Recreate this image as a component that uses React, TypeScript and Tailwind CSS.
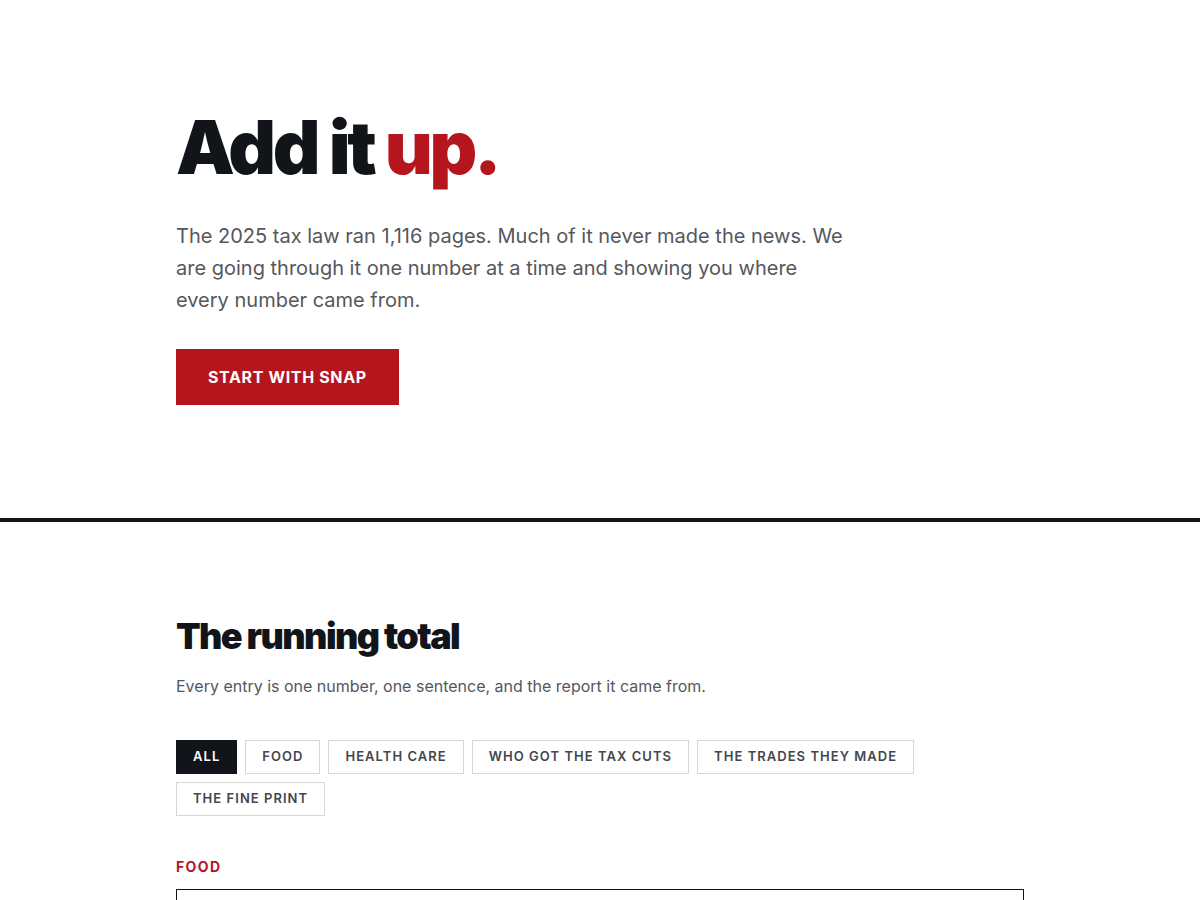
import React, { useState } from 'react';

const filters = [
    { key: 'all', label: 'All' },
    { key: 'food', label: 'Food' },
    { key: 'health', label: 'Health care' },
    { key: 'cuts', label: 'Who got the tax cuts' },
    { key: 'trades', label: 'The trades they made' },
    { key: 'fine', label: 'The fine print' },
];

export default function App() {
    const [active, setActive] = useState('all');

    return (
        <div className="min-h-screen bg-white text-[#111418] font-['Inter',sans-serif]">
            <section className="border-b-4 border-[#111418]">
                <div className="max-w-[848px] mx-auto pt-[110px] pb-[113px]">
                    <h1 className="text-[74px] leading-none font-black tracking-[-0.045em]">
                        Add it <span className="text-[#b5161e]">up.</span>
                    </h1>
                    <p className="mt-[36px] max-w-[672px] text-[20px] leading-8 text-[#55575c]">
                        The 2025 tax law ran 1,116 pages. Much of it never made the news. We are going through it one number at a time and showing you where every number came from.
                    </p>
                    <button className="mt-[33px] h-14 px-8 bg-[#b5161e] text-white text-base font-bold tracking-[0.04em] uppercase">
                        Start with SNAP
                    </button>
                </div>
            </section>

            <section>
                <div className="max-w-[848px] mx-auto pt-[92px]">
                    <h2 className="text-[36px] leading-tight font-black tracking-[-0.045em]">The running total</h2>
                    <p className="mt-[15px] text-[16px] text-[#55575c]">
                        Every entry is one number, one sentence, and the report it came from.
                    </p>
                    <div className="mt-[42px] flex flex-wrap gap-2">
                        {filters.map(f => (
                            <button
                                key={f.key}
                                onClick={() => setActive(f.key)}
                                className={`h-[34px] px-4 border text-[13px] font-semibold uppercase tracking-[0.08em] ${active === f.key ? 'bg-[#111418] border-[#111418] text-white' : 'bg-white border-[#d6d6d6] text-[#44474d]'}`}
                            >
                                {f.label}
                            </button>
                        ))}
                    </div>
                    <div className="mt-10 text-[14px] font-bold uppercase tracking-[0.1em] text-[#b5161e]">Food</div>
                    <div className="mt-3 border border-[#111418] h-[200px]"></div>
                </div>
            </section>
        </div>
    );
}
